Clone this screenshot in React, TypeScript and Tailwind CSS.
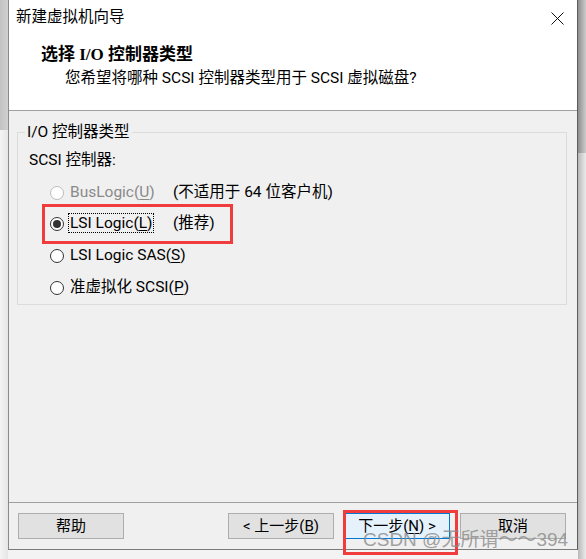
import React from 'react';

const UI_FONT = { fontFamily: 'Roboto, "Noto Sans CJK SC", sans-serif' };
const TITLE_FONT = { fontFamily: '"Liberation Serif", "Noto Sans CJK SC", serif' };

const Radio: React.FC<{ checked?: boolean; disabled?: boolean }> = ({ checked, disabled }) => (
  <span
    className={`flex h-[14px] w-[14px] shrink-0 items-center justify-center rounded-full border bg-white ${
      disabled ? 'border-[#bcbcbc]' : 'border-[#333333]'
    }`}
  >
    {checked && <span className="h-[8px] w-[8px] rounded-full bg-[#333333]" />}
  </span>
);

const Option: React.FC<{
  label: string;
  hotkey: string;
  note?: string;
  checked?: boolean;
  disabled?: boolean;
  focused?: boolean;
  height: string;
}> = ({ label, hotkey, note, checked, disabled, focused, height }) => (
  <div className={`flex items-center whitespace-nowrap pl-[32px] ${height}`}>
    <Radio checked={checked} disabled={disabled} />
    <span className="ml-[4px] min-w-[105px]">
      <span
        className={`inline-block px-[1px] leading-[18px] ${focused ? 'border border-dotted border-black' : 'border border-transparent'} ${
          disabled ? 'text-[#8a8a8a]' : 'text-black'
        }`}
      >
        {label}(<span className="underline underline-offset-2">{hotkey}</span>)
      </span>
    </span>
    {note && <span className="text-black">{note}</span>}
  </div>
);

const Button: React.FC<{ children: React.ReactNode; primary?: boolean }> = ({ children, primary }) => (
  <button
    className={`flex h-[26px] w-[106px] items-center justify-center whitespace-nowrap border text-[15px] text-black ${
      primary ? 'border-[#0078d7] bg-[#e5f1fb]' : 'border-[#adadad] bg-[#e1e1e1]'
    }`}
  >
    {children}
  </button>
);

export default function App() {
  return (
    <div className="relative flex h-[559px] w-[586px] overflow-hidden bg-[#f3f3f3] text-[15.5px]" style={UI_FONT}>
      {/* left backdrop */}
      <div className="flex w-[8px] flex-col">
        <div className="h-[130px] bg-gradient-to-r from-[#c2c2c2] to-[#d0d0d0]" />
        <div className="flex-1 bg-gradient-to-r from-[#f4f4f4] to-[#e6e6e6]" />
      </div>

      {/* dialog window */}
      <div className="flex h-[550px] w-[570px] flex-col border-b border-l border-r border-b-[#7a7a7a] border-l-[#8a8a8a] border-r-[#5c5c5c]">
        <div className="h-[111px] border-b border-[#a0a0a0] bg-white">
          <div className="flex h-[36px] items-center justify-between pl-[7px] pr-[13px]">
            <span className="text-black">新建虚拟机向导</span>
            <svg width="13" height="13" viewBox="0 0 13 13">
              <path d="M0.5 0.5 L12.5 12.5 M12.5 0.5 L0.5 12.5" stroke="#111" strokeWidth="1" fill="none" />
            </svg>
          </div>
          <div className="mt-[8px] pl-[32px] text-[17px] font-bold leading-[22px] text-black" style={TITLE_FONT}>
            选择 I/O 控制器类型
          </div>
          <div className="mt-[2px] pl-[56px] leading-[20px] text-black">
            您希望将哪种 SCSI 控制器类型用于 SCSI 虚拟磁盘?
          </div>
        </div>

        <div className="flex flex-1 flex-col bg-[#f0f0f0]">
          <fieldset className="ml-[8px] mr-[10px] mt-[11px] border border-[#dcdcdc]">
            <legend className="ml-[7px] px-[2px] leading-[20px] text-black">I/O 控制器类型</legend>
            <div className="mt-[8px] pl-[11px] leading-[20px] text-black">SCSI 控制器:</div>
            <div className="mt-[7px] flex flex-col">
              <Option label="BusLogic" hotkey="U" note="(不适用于 64 位客户机)" disabled height="h-[31px]" />
              <Option label="LSI Logic" hotkey="L" note="(推荐)" checked focused height="h-[32px]" />
              <Option label="LSI Logic SAS" hotkey="S" height="h-[32px]" />
              <Option label="准虚拟化 SCSI" hotkey="P" height="h-[32px]" />
            </div>
          </fieldset>

          <div className="mt-auto flex border-t border-[#a0a0a0] pb-[10px] pl-[9px] pr-[11px] pt-[10px]">
            <Button>帮助</Button>
            <div className="ml-auto flex gap-[10px]">
              <Button>
                &lt; 上一步(<span className="underline underline-offset-2">B</span>)
              </Button>
              <Button primary>
                下一步(<span className="underline underline-offset-2">N</span>) &gt;
              </Button>
              <Button>取消</Button>
            </div>
          </div>
        </div>
      </div>

      {/* right backdrop */}
      <div className="flex flex-1 flex-col">
        <div className="h-[153px] bg-gradient-to-r from-[#8e8e8e] to-[#cdcdcd]" />
        <div className="flex-1 bg-gradient-to-r from-[#b8b8b8] to-[#ececec]" />
      </div>

      {/* annotations */}
      <div className="absolute left-[42px] top-[204px] h-[40px] w-[191px] border-[3px] border-[#f03c3c]" />
      <div className="absolute left-[343px] top-[510px] h-[45px] w-[115px] border-[3px] border-[#f03c3c]" />
      <div
        className="absolute left-[363px] top-[527px] whitespace-nowrap text-[19px] leading-[26px] text-[#8a8a8a]/80"
        style={{ fontFamily: '"Liberation Sans", "Noto Sans CJK SC", sans-serif' }}
      >
        CSDN @无所谓～～394
      </div>
    </div>
  );
}
